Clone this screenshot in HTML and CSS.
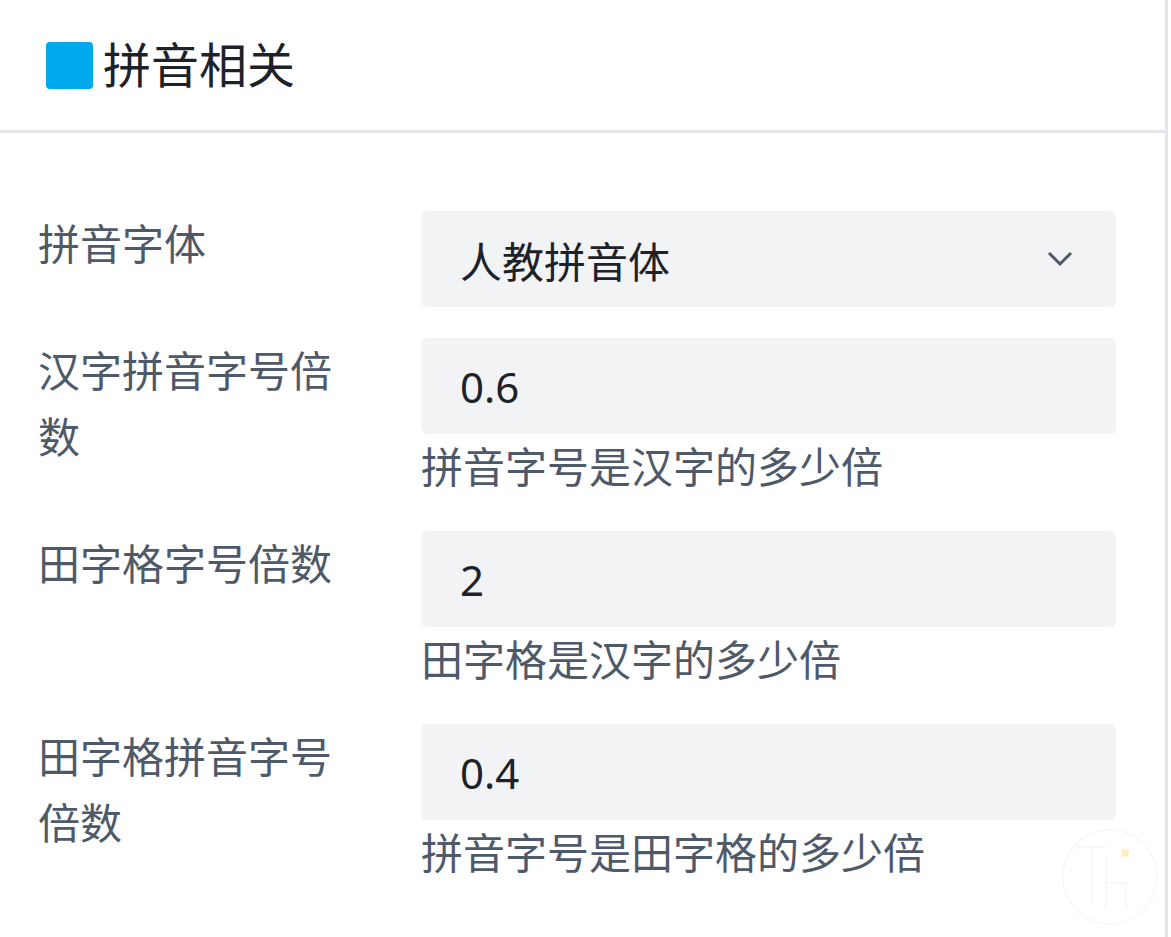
FILE: index.html
```html
<!DOCTYPE html>
<html lang="zh-CN">
<head>
    <meta charset="UTF-8">
    <meta name="viewport" content="width=device-width, initial-scale=1.0">
    <title>拼音相关</title>
    <link rel="stylesheet" href="styles.css">
</head>
<body>
    <div class="panel">
        <div class="panel-header">
            <span class="mark"></span>
            <h2>拼音相关</h2>
        </div>

        <form class="form">
            <div class="form-item">
                <label class="form-label">拼音字体</label>
                <div class="form-control">
                    <div class="select">
                        <span>人教拼音体</span>
                        <svg class="arrow" width="26" height="16" viewBox="0 0 26 16">
                            <path d="M2 2 L13 13 L24 2" fill="none" stroke="#4e5969" stroke-width="3"/>
                        </svg>
                    </div>
                </div>
            </div>

            <div class="form-item">
                <label class="form-label">汉字拼音字号倍数</label>
                <div class="form-control">
                    <input class="input" type="text" value="0.6">
                    <div class="extra">拼音字号是汉字的多少倍</div>
                </div>
            </div>

            <div class="form-item">
                <label class="form-label">田字格字号倍数</label>
                <div class="form-control">
                    <input class="input" type="text" value="2">
                    <div class="extra">田字格是汉字的多少倍</div>
                </div>
            </div>

            <div class="form-item">
                <label class="form-label">田字格拼音字号倍数</label>
                <div class="form-control">
                    <input class="input" type="text" value="0.4">
                    <div class="extra">拼音字号是田字格的多少倍</div>
                </div>
            </div>
        </form>

        <!-- 右下角水印 -->
        <svg class="watermark" width="100" height="100" viewBox="0 0 100 100">
            <circle cx="50" cy="50" r="47" fill="none" stroke="#f8f7f2" stroke-width="1.5"/>
            <path d="M18 20 H46 M32 20 V78 M46 28 V82 M46 56 H66 V82" fill="none" stroke="#f9f8f3" stroke-width="2"/>
            <circle cx="65" cy="26" r="4" fill="#feedbd"/>
        </svg>
    </div>
</body>
</html>
```

FILE: styles.css
```css
/* 基本设置 */
body {
    margin: 0;
    background-color: #fff;
    font-family: "Noto Sans", "Noto Sans CJK SC", sans-serif;
}

.panel {
    position: relative;
    width: 1165px;
    min-height: 937px;
    border-right: 3px solid #e5e6eb;
}

.panel-header {
    display: flex;
    align-items: center;
    height: 130px;
    padding-left: 46px;
    border-bottom: 3px solid #e5e6eb;
}

.mark {
    width: 47px;
    height: 47px;
    border-radius: 4px;
    background-color: #00a8ee;
    margin-right: 10px;
}

.panel-header h2 {
    margin: 0;
    font-size: 48px;
    font-weight: normal;
    color: #1d2129;
    line-height: 1;
}

.form {
    padding: 78px 49px 0 38px;
}

.form-item {
    display: grid;
    grid-template-columns: 320px 1fr;
    column-gap: 63px;
    margin-bottom: 31px;
}

.form-label {
    font-size: 42px;
    line-height: 66px;
    color: #4e5969;
}

.form-control {
    display: flex;
    flex-direction: column;
}

.select,
.input {
    box-sizing: border-box;
    width: 100%;
    height: 96px;
    padding: 0 39px;
    border: none;
    border-radius: 6px;
    background-color: #f2f3f5;
    font-family: "Noto Sans", "Noto Sans CJK SC", sans-serif;
    font-size: 42px;
    color: #1d2129;
    outline: none;
}

.select {
    display: flex;
    align-items: center;
    justify-content: space-between;
    padding-right: 43px;
}

.arrow {
    display: block;
}

.extra {
    font-size: 42px;
    line-height: 66px;
    color: #4e5969;
}

.watermark {
    position: absolute;
    right: 5px;
    bottom: 10px;
}
```
